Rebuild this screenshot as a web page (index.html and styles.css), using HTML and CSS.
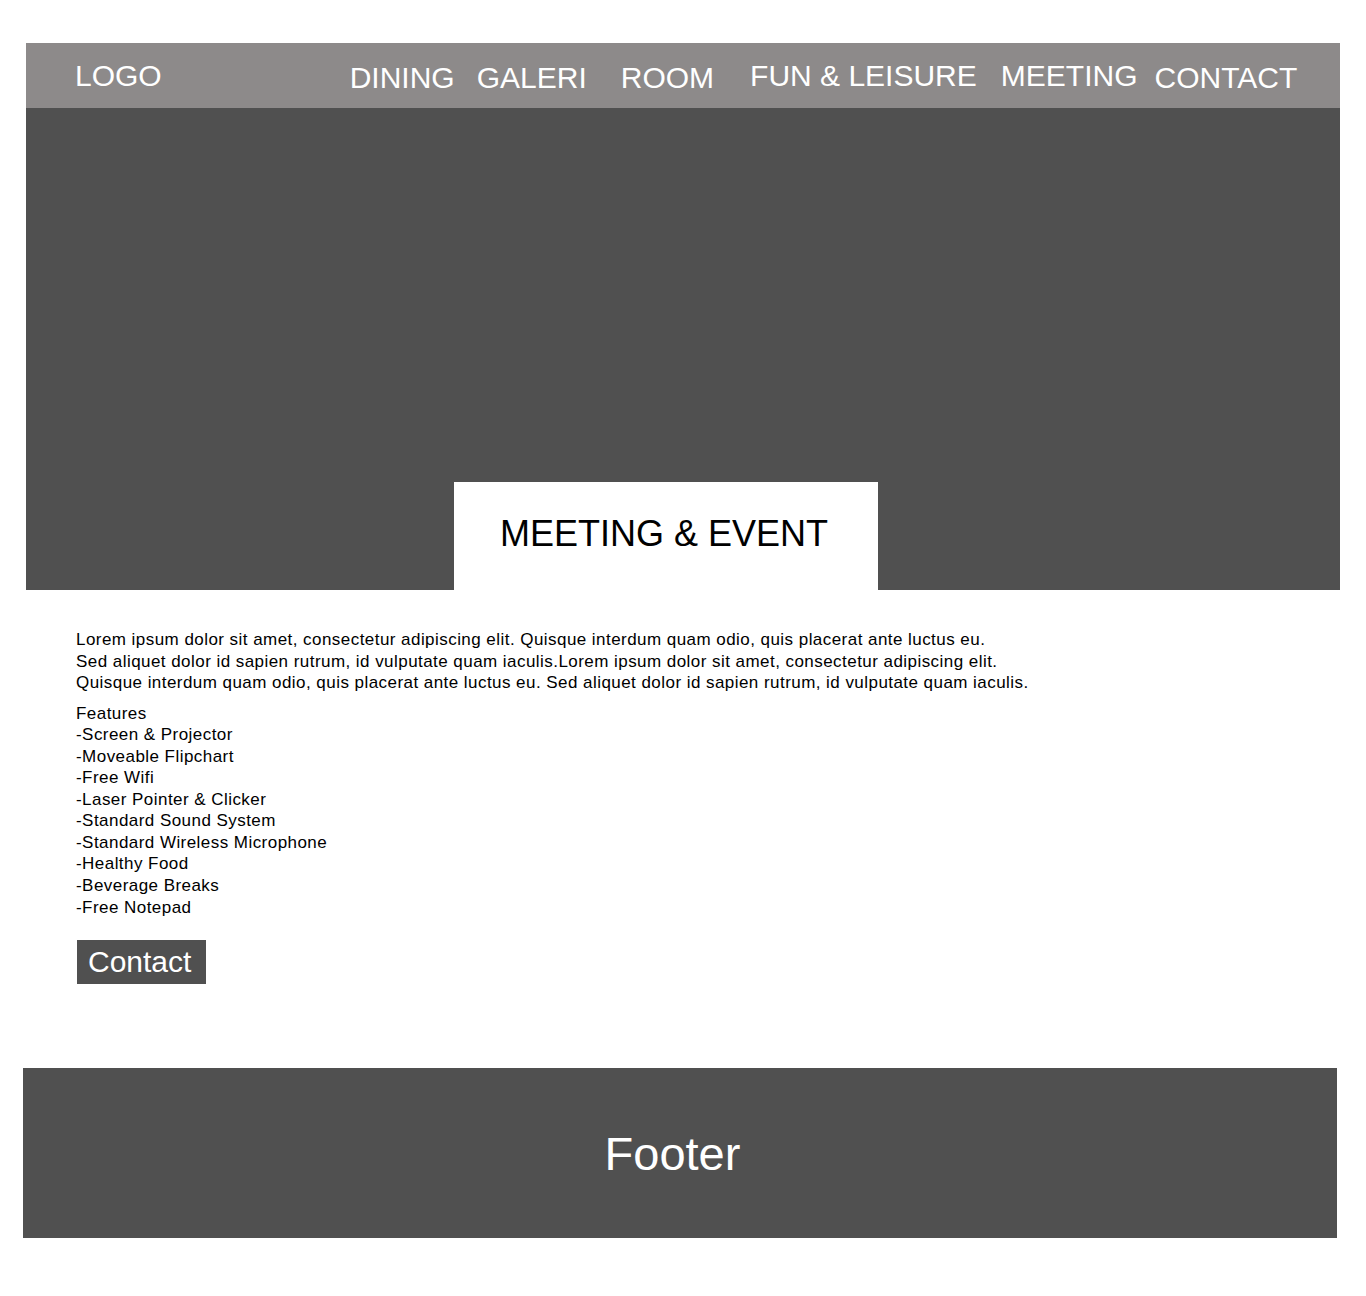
FILE: index.html
```html
<!DOCTYPE html>
<html lang="en">
<head>
<meta charset="utf-8">
<title>Meeting &amp; Event</title>
<link rel="stylesheet" href="styles.css">
</head>
<body>
<div class="page">
  <header class="topbar">
    <div class="logo">LOGO</div>
    <nav class="nav">
      <a class="nav-item nav-dining" href="#">DINING</a>
      <a class="nav-item nav-galeri" href="#">GALERI</a>
      <a class="nav-item nav-room" href="#">ROOM</a>
      <a class="nav-item nav-fun up" href="#">FUN &amp; LEISURE</a>
      <a class="nav-item nav-meeting up" href="#">MEETING</a>
      <a class="nav-item nav-contact" href="#">CONTACT</a>
    </nav>
  </header>
  <section class="hero">
    <div class="title-box"><h1 class="title">MEETING &amp; EVENT</h1></div>
  </section>
  <main class="content">
    <p class="intro">Lorem ipsum dolor sit amet, consectetur adipiscing elit. Quisque interdum quam odio, quis placerat ante luctus eu.<br>Sed aliquet dolor id sapien rutrum, id vulputate quam iaculis.Lorem ipsum dolor sit amet, consectetur adipiscing elit.<br>Quisque interdum quam odio, quis placerat ante luctus eu. Sed aliquet dolor id sapien rutrum, id vulputate quam iaculis.</p>
    <div class="features">
      <div>Features</div>
      <div>-Screen &amp; Projector</div>
      <div>-Moveable Flipchart</div>
      <div>-Free Wifi</div>
      <div>-Laser Pointer &amp; Clicker</div>
      <div>-Standard Sound System</div>
      <div>-Standard Wireless Microphone</div>
      <div>-Healthy Food</div>
      <div>-Beverage Breaks</div>
      <div>-Free Notepad</div>
    </div>
    <a class="contact-btn" href="#">Contact</a>
  </main>
  <footer class="footer">Footer</footer>
</div>
</body>
</html>
```

FILE: styles.css
```css
html, body {
  margin: 0;
  padding: 0;
  background: #ffffff;
}

body {
  font-family: "Liberation Sans", Arial, sans-serif;
  color: #000000;
}

.page {
  padding-top: 43px;
  padding-bottom: 58px;
}

.topbar {
  margin-left: 26px;
  width: 1314px;
  height: 65px;
  background: #8d8a8a;
  display: flex;
  align-items: flex-start;
  box-sizing: border-box;
}

.logo {
  color: #ffffff;
  font-size: 30px;
  line-height: 34px;
  padding-top: 16px;
  margin-left: 49px;
}

.nav {
  display: flex;
  align-items: flex-start;
}

.nav-item {
  color: #ffffff;
  text-decoration: none;
  font-size: 30px;
  line-height: 34px;
  padding-top: 18px;
}

.nav-item.up {
  padding-top: 16px;
}

.nav-dining { margin-left: 188px; }
.nav-galeri { margin-left: 22px; }
.nav-room { margin-left: 34px; }
.nav-fun { margin-left: 36px; }
.nav-meeting { margin-left: 24px; }
.nav-contact { margin-left: 17px; }

.hero {
  margin-left: 26px;
  width: 1314px;
  height: 482px;
  background: #505050;
  display: flex;
  align-items: flex-end;
}

.title-box {
  margin-left: 428px;
  width: 424px;
  height: 108px;
  background: #ffffff;
  box-sizing: border-box;
  padding: 31px 4px 0 0;
}

.title {
  margin: 0;
  font-weight: normal;
  font-size: 36px;
  line-height: 42px;
  text-align: center;
}

.content {
  margin-left: 26px;
  padding: 39px 0 0 50px;
  font-size: 17px;
  line-height: 21.55px;
  letter-spacing: 0.45px;
}

.intro {
  margin: 0 0 9px 0;
}

.features {
  margin-bottom: 22px;
}

.contact-btn {
  display: inline-block;
  margin-left: 1px;
  height: 44px;
  padding: 0 15px 0 11px;
  background: #505050;
  color: #ffffff;
  text-decoration: none;
  font-size: 30px;
  line-height: 44px;
  letter-spacing: 0;
}

.footer {
  margin: 84px 0 0 23px;
  width: 1314px;
  height: 170px;
  background: #505050;
  color: #ffffff;
  font-size: 47px;
  display: flex;
  align-items: center;
  justify-content: center;
  box-sizing: border-box;
  padding-right: 15px;
}
```
